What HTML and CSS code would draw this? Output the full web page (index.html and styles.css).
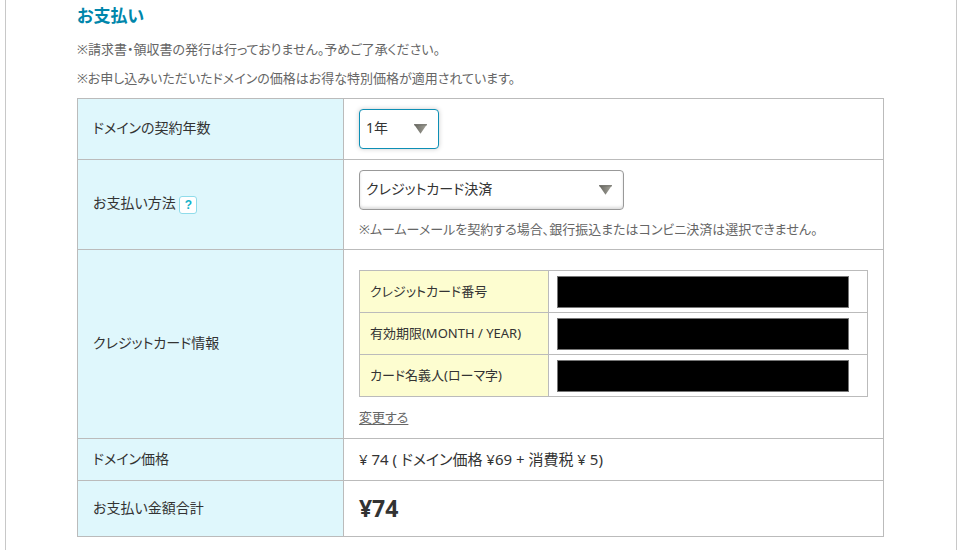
FILE: index.html
```html
<!DOCTYPE html>
<html lang="ja">
<head>
<meta charset="utf-8">
<meta name="viewport" content="width=device-width, initial-scale=1">
<title>お支払い</title>
<link rel="stylesheet" href="styles.css">
</head>
<body>
<main class="frame">
  <h2 class="title">お支払い</h2>
  <p class="note">※請求書・領収書の発行は行っておりません。予めご了承ください。</p>
  <p class="note">※お申し込みいただいたドメインの価格はお得な特別価格が適用されています。</p>
  <table class="form">
    <tr class="row-years">
      <th scope="row"><label for="years">ドメインの契約年数</label></th>
      <td>
        <div class="picker picker-short">
          <select id="years" class="select select-active"><option>1年</option></select>
          <svg class="arrow" viewBox="0 0 14 10" aria-hidden="true"><defs><linearGradient id="shade" x2="1" y2="0"><stop offset="0" stop-color="#66665f"/><stop offset="1" stop-color="#a5a49b"/></linearGradient></defs><path d="M0 0H14L7 10Z" fill="url(#shade)"/><path d="M0 .5H14" stroke="#66665f"/></svg>
        </div>
      </td>
    </tr>
    <tr class="row-method">
      <th scope="row"><label for="method">お支払い方法</label> <button type="button" class="help">?</button></th>
      <td>
        <div class="picker picker-long">
          <select id="method" class="select"><option>クレジットカード決済</option></select>
          <svg class="arrow" viewBox="0 0 14 10" aria-hidden="true"><path d="M0 0H14L7 10Z" fill="url(#shade)"/><path d="M0 .5H14" stroke="#66665f"/></svg>
        </div>
        <p class="hint">※ムームーメールを契約する場合、銀行振込またはコンビニ決済は選択できません。</p>
      </td>
    </tr>
    <tr class="row-card">
      <th scope="row">クレジットカード情報</th>
      <td>
        <table class="card">
          <tr><th scope="row">クレジットカード番号</th><td><div class="mask"></div></td></tr>
          <tr><th scope="row">有効期限(MONTH / YEAR)</th><td><div class="mask"></div></td></tr>
          <tr><th scope="row">カード名義人(ローマ字)</th><td><div class="mask"></div></td></tr>
        </table>
        <a class="change" href="#">変更する</a>
      </td>
    </tr>
    <tr class="row-price">
      <th scope="row">ドメイン価格</th>
      <td class="price">¥ 74 ( ドメイン価格 ¥69 + 消費税 ¥ 5)</td>
    </tr>
    <tr class="row-total">
      <th scope="row">お支払い金額合計</th>
      <td><strong class="total">¥74</strong></td>
    </tr>
  </table>
</main>
</body>
</html>
```
FILE: styles.css
```css
* {
  box-sizing: border-box;
}

body {
  margin: 0;
  background: #fff;
  color: #333;
  font-family: "Noto Sans", "Noto Sans CJK JP", sans-serif;
  font-size: 14px;
  line-height: 20px;
  font-feature-settings: "palt";
}

.frame {
  margin: 0 6px 0 5px;
  padding: 3px 72px 13px 71px;
  border: solid #c8c8c8;
  border-width: 0 1px;
}

.title {
  margin: 0 0 10px;
  color: #0086ab;
  font-size: 17px;
  line-height: 26px;
}

.note,
.hint {
  margin: 0;
  color: #666;
  font-size: 13px;
}

.note {
  margin-bottom: 9px;
}

table {
  width: 100%;
  border-collapse: separate;
  border-spacing: 0;
  border: solid #bbb;
  border-width: 1px 0 0 1px;
}

th,
td {
  padding: 0 15px 2px;
  border: solid #bbb;
  border-width: 0 1px 1px 0;
  text-align: left;
  font-weight: 400;
}

.form {
  margin-top: 10px;
  table-layout: fixed;
}

.form > tbody > tr > th {
  width: 33%;
  background: #dff7fc;
}

.row-years > td {
  padding: 10px 15px;
}

.row-method > td {
  padding: 10px 15px;
}

.row-card > td {
  padding: 20px 15px 11px;
}

.row-price {
  height: 42px;
}

.row-total {
  height: 56px;
}

.picker {
  position: relative;
  height: 40px;
}

.picker-short {
  width: 80px;
}

.picker-long {
  width: 265px;
  margin-bottom: 9px;
}

.select {
  display: block;
  appearance: none;
  width: 100%;
  height: 100%;
  padding: 0 6px 2px;
  border: 1px solid #999;
  border-radius: 4px;
  background: #fff;
  box-shadow: inset 0 -2px 3px #ddd;
  color: #333;
  font: inherit;
  font-feature-settings: inherit;
}

.select-active {
  border-color: #0d8fb5;
  box-shadow: 0 0 5px #ccc;
}

.arrow {
  position: absolute;
  top: 15px;
  right: 12px;
  width: 13px;
  height: 10px;
  pointer-events: none;
}

.help {
  width: 18px;
  height: 18px;
  padding: 0;
  border: 1px solid #8fdcea;
  border-radius: 3px;
  background: #fff;
  color: #12b2ca;
  font: bold 12px/16px "Liberation Sans", sans-serif;
  vertical-align: middle;
}

.card {
  margin-bottom: 10px;
}

.card th,
.card td {
  height: 42px;
}

.card th {
  width: 189px;
  padding: 0 10px 2px;
  background: #fdfdd0;
  font-size: 13px;
}

.card td {
  padding: 0 18px 0 8px;
}

.mask {
  height: 32px;
  border: 1px solid #777;
  background: #000;
}

.change {
  color: #666;
  font-size: 13px;
  text-underline-offset: 2px;
}

.price {
  font-size: 15px;
}

.total {
  font-size: 23px;
  line-height: 28px;
}
```
